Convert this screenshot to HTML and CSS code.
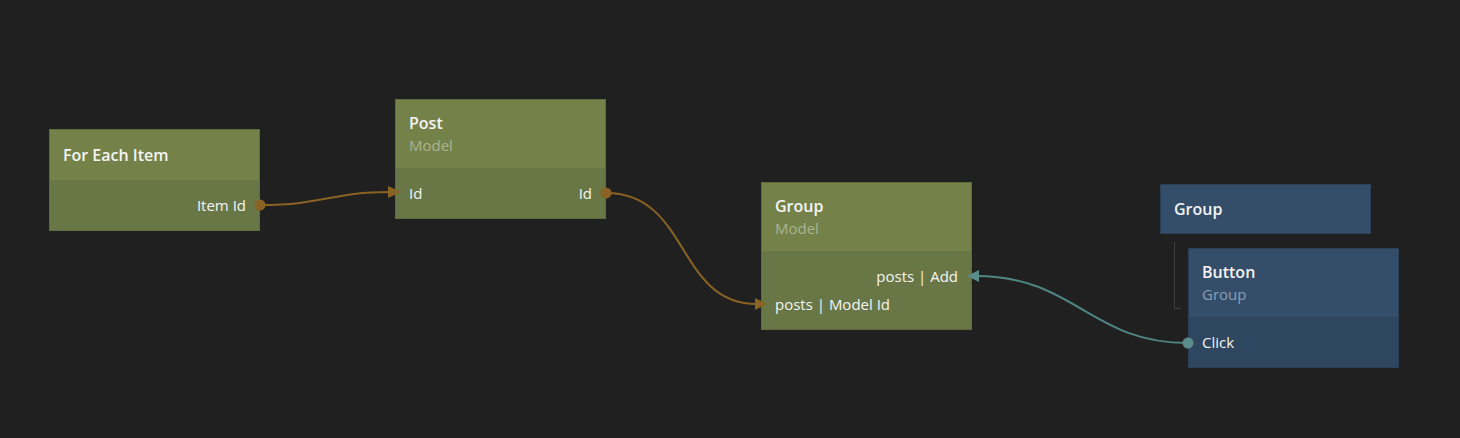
FILE: index.html
```html
<!DOCTYPE html>
<html>
<head>
    <meta charset="utf-8">
    <title>Node Graph</title>
    <link rel="stylesheet" href="styles.css">
</head>
<body>
    <div class="canvas">
        <!-- For Each Item -->
        <div class="node node-green" style="left: 49px; top: 129px;">
            <div class="node-head">
                <div class="node-title">For Each Item</div>
            </div>
            <div class="node-body">
                <div class="port port-out">Item Id</div>
            </div>
        </div>

        <!-- Post model -->
        <div class="node node-green" style="left: 395px; top: 99px;">
            <div class="node-head">
                <div class="node-title">Post</div>
                <div class="node-type">Model</div>
            </div>
            <div class="node-body">
                <div class="port port-both"><span>Id</span><span>Id</span></div>
            </div>
        </div>

        <!-- Group model -->
        <div class="node node-green" style="left: 761px; top: 182px;">
            <div class="node-head">
                <div class="node-title">Group</div>
                <div class="node-type">Model</div>
            </div>
            <div class="node-body">
                <div class="port port-out">posts | Add</div>
                <div class="port">posts | Model Id</div>
            </div>
        </div>

        <!-- Visual tree -->
        <div class="node node-blue node-bare" style="left: 1160px; top: 184px;">
            <div class="node-head">
                <div class="node-title">Group</div>
            </div>
        </div>
        <div class="tree-line" style="left: 1174px; top: 242px;"></div>

        <div class="node node-blue" style="left: 1188px; top: 248px;">
            <div class="node-head">
                <div class="node-title">Button</div>
                <div class="node-type">Group</div>
            </div>
            <div class="node-body">
                <div class="port">Click</div>
            </div>
        </div>

        <svg class="wires" width="1460" height="438" viewBox="0 0 1460 438">
            <g class="wire-data">
                <path d="M260 205 C 325 205, 330 192, 390 192"/>
                <path d="M606 193 C 690 193, 676 304, 757 304"/>
            </g>
            <g class="wire-data-fill">
                <circle cx="260" cy="205" r="5.5"/>
                <circle cx="606" cy="193" r="5.5"/>
                <polygon points="388,186 401,192 388,198"/>
                <polygon points="755,298 767,304 755,310"/>
            </g>
            <path class="wire-signal" d="M1188 343 C 1090 343, 1075 276, 976 276"/>
            <circle class="wire-signal-fill" cx="1188" cy="343" r="5.5"/>
            <polygon class="wire-signal-fill" points="979,270 967,276 979,282"/>
        </svg>
    </div>
</body>
</html>
```

FILE: styles.css
```css
body {
    margin: 0;
    background-color: #202020;
    font-family: "Open Sans", "Noto Sans", sans-serif;
}
.canvas {
    position: relative;
    width: 1460px;
    height: 438px;
    overflow: hidden;
    background: #202020;
}
.node {
    position: absolute;
    width: 211px;
    box-sizing: border-box;
    border: 1px solid #5c6a3a;
    color: #f4f4f4;
}
.node-head {
    display: flex;
    flex-direction: column;
    justify-content: center;
    min-height: 50px;
    box-sizing: border-box;
    padding: 12px 13px;
}
.node-bare .node-head {
    min-height: 48px;
}
.node-title {
    font-size: 16px;
    font-weight: 600;
    line-height: 22px;
}
.node-type {
    font-size: 15px;
    line-height: 22px;
}
.node-body {
    padding: 11px 13px;
}
.port {
    display: flex;
    align-items: center;
    height: 28px;
    font-size: 15px;
    line-height: 28px;
}
.port-out {
    justify-content: flex-end;
}
.port-both {
    justify-content: space-between;
}

.node-green {
    border-color: #5e6b3c;
}
.node-green .node-head {
    background: #74824a;
}
.node-green .node-body {
    background: #697746;
}
.node-green .node-type {
    color: #aab291;
}

.node-blue {
    border-color: #2b3f57;
}
.node-blue .node-head {
    background: #344d69;
}
.node-blue .node-body {
    background: #2e4660;
}
.node-blue .node-type {
    color: #8c9db2;
}

.tree-line {
    position: absolute;
    width: 6px;
    height: 66px;
    border-left: 1px solid #3e3e3e;
    border-bottom: 1px solid #3e3e3e;
}

.wires {
    position: absolute;
    left: 0;
    top: 0;
    pointer-events: none;
}
.wire-data path {
    fill: none;
    stroke: #8a6324;
    stroke-width: 2;
}
.wire-data-fill {
    fill: #8a6324;
}
.wire-signal {
    fill: none;
    stroke: #4f8584;
    stroke-width: 2;
}
.wire-signal-fill {
    fill: #5a8d8a;
}
```
